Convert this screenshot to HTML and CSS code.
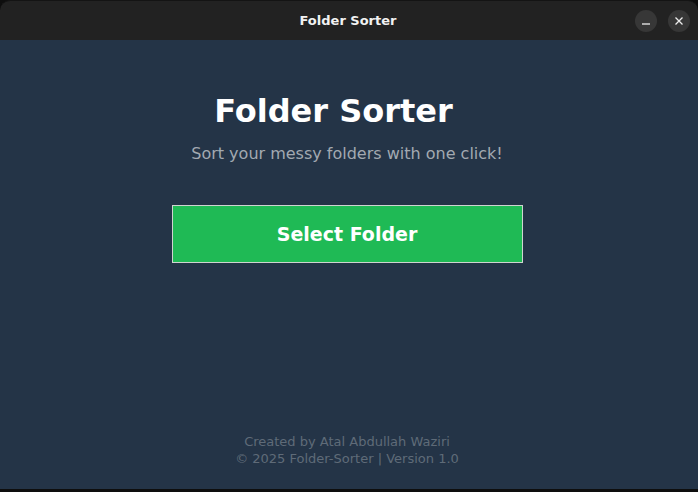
FILE: index.html
```html
<!DOCTYPE html>
<html>
<head>
<meta charset="utf-8">
<link rel="stylesheet" href="styles.css">
</head>
<body>
<div class="window">
  <header class="titlebar">
    <span class="title">Folder Sorter</span>
    <div class="controls">
      <span class="ctl"><svg width="10" height="10" viewBox="0 0 10 10"><line x1="1" y1="8" x2="9" y2="8" stroke="#eee" stroke-width="1.3"/></svg></span>
      <span class="ctl"><svg width="10" height="10" viewBox="0 0 10 10"><path d="M1.5 1.5 L8.5 8.5 M8.5 1.5 L1.5 8.5" stroke="#eee" stroke-width="1.3"/></svg></span>
    </div>
  </header>
  <main class="content">
    <h1 class="heading">Folder Sorter</h1>
    <p class="subtitle">Sort your messy folders with one click!</p>
    <button class="select-btn">Select Folder</button>
    <div class="spacer"></div>
    <footer class="footer">
      <div>Created by Atal Abdullah Waziri</div>
      <div>© 2025 Folder-Sorter | Version 1.0</div>
    </footer>
  </main>
</div>
</body>
</html>
```

FILE: styles.css
```css
html, body {
  margin: 0;
  padding: 0;
  background: #0e0e0e;
  width: 698px;
  height: 492px;
  overflow: hidden;
}
.window {
  width: 698px;
  height: 489px;
  display: flex;
  flex-direction: column;
  font-family: "DejaVu Sans", sans-serif;
}
.titlebar {
  height: 40px;
  flex: none;
  background: #222222;
  border-radius: 10px 10px 0 0;
  border-top: 1px solid #141414;
  box-sizing: border-box;
  display: flex;
  align-items: center;
  justify-content: center;
  position: relative;
}
.title {
  color: #f2f2f2;
  font-weight: bold;
  font-size: 13px;
  margin-left: -2px;
}
.controls {
  position: absolute;
  right: 8px;
  top: 9px;
  display: flex;
  gap: 11px;
}
.ctl {
  width: 22px;
  height: 22px;
  border-radius: 50%;
  background: #373737;
  display: flex;
  align-items: center;
  justify-content: center;
}
.content {
  flex: 1;
  background: #243447;
  display: flex;
  flex-direction: column;
  align-items: center;
  padding-right: 4px;
}
.heading {
  margin: 51px 0 0;
  padding-right: 27px;
  color: #ffffff;
  font-size: 32px;
  font-weight: bold;
  line-height: 40px;
}
.subtitle {
  margin: 13px 0 0;
  color: #a2a9b1;
  font-size: 16px;
  line-height: 20px;
}
.select-btn {
  margin-top: 41px;
  width: 351px;
  height: 58px;
  background: #1fba55;
  border: 1px solid #cfd4d0;
  color: #ffffff;
  font-family: "DejaVu Sans", sans-serif;
  font-weight: bold;
  font-size: 19px;
  padding: 0;
}
.spacer {
  flex: 1;
}
.footer {
  color: #5f6b78;
  font-size: 13px;
  line-height: 17px;
  text-align: center;
  margin-bottom: 22px;
}
```
